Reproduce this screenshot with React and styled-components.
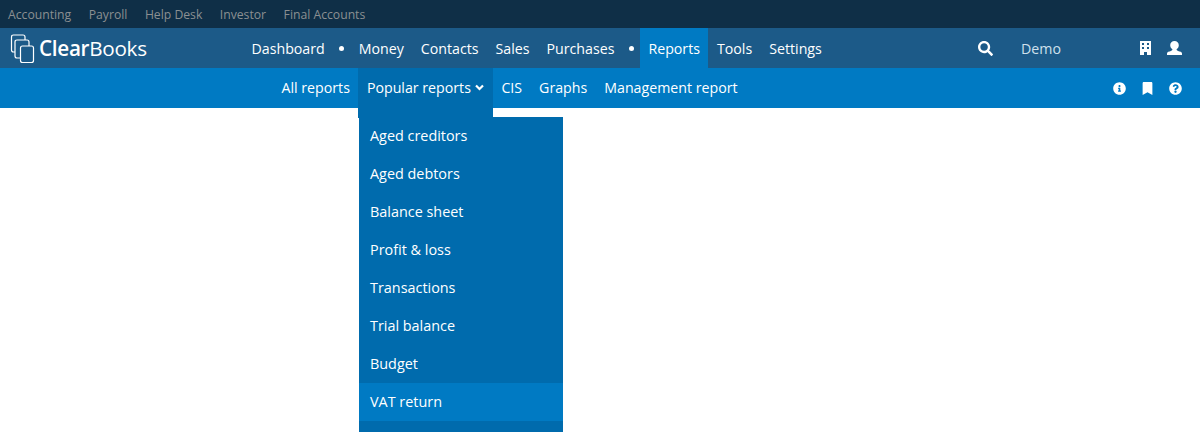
import React from 'react';
import styled, { createGlobalStyle } from 'styled-components';
import { FaSearch, FaInfoCircle, FaBookmark, FaQuestionCircle } from 'react-icons/fa';

const GlobalStyle = createGlobalStyle`
  html, body {
    margin: 0;
    padding: 0;
    background: #ffffff;
  }
  body {
    font-family: 'Open Sans', 'Liberation Sans', sans-serif;
    overflow: hidden;
  }
`;

const Page = styled.div`
  position: relative;
  width: 1200px;
  height: 432px;
  overflow: hidden;
`;

const TopBar = styled.div`
  display: flex;
  align-items: center;
  gap: 17.5px;
  height: 28px;
  padding-left: 8px;
  background-color: #0f2f47;
`;

const TopLink = styled.a`
  font-size: 12.2px;
  color: #8b8f92;
`;

const MainBar = styled.div`
  display: flex;
  align-items: stretch;
  height: 40px;
  background-color: #1c5a88;
`;

const Logo = styled.div`
  display: flex;
  align-items: center;
  width: 243px;
  padding-left: 10px;
  box-sizing: border-box;
  color: #ffffff;
`;

const LogoText = styled.span`
  font-size: 20.7px;
  letter-spacing: -0.3px;
  font-weight: ${(p) => (p.$bold ? 600 : 400)};
  margin-left: ${(p) => (p.$bold ? -1 : 0)}px;
`;

const NavItem = styled.a`
  display: flex;
  align-items: center;
  padding: 0 8.5px;
  font-size: 14.2px;
  color: #ffffff;
  background-color: ${(p) => (p.$active ? '#007ac3' : 'transparent')};
`;

const Dot = styled.span`
  align-self: center;
  width: 5px;
  height: 5px;
  margin: 0 6px;
  border-radius: 50%;
  background-color: #ffffff;
`;

const MainRight = styled.div`
  display: flex;
  align-items: center;
  margin-left: auto;
  padding-right: 18px;
  color: #ffffff;
  font-size: 15px;
`;

const DemoLabel = styled.span`
  margin: 0 79px 0 28px;
  font-size: 14.2px;
  color: #cfe0ec;
`;

const UserGlyph = styled.svg`
  margin-left: 16px;
`;

const SubBar = styled.div`
  display: flex;
  align-items: stretch;
  height: 40px;
  padding-left: 273px;
  background-color: #007ac3;
`;

const SubItem = styled(NavItem)`
  padding-bottom: 1px;
  box-sizing: border-box;
`;

const OpenSubItem = styled(SubItem)`
  position: relative;
  gap: 4.5px;
  background-color: #006bad;

  &::after {
    content: '';
    position: absolute;
    top: 100%;
    left: 0;
    right: 0;
    height: 10px;
    background-color: #006bad;
  }
`;

const SubIcons = styled.div`
  display: flex;
  align-items: center;
  gap: 15px;
  margin-left: auto;
  padding-right: 18px;
  color: #ffffff;
  font-size: 13px;
`;

const Menu = styled.div`
  position: absolute;
  top: 117px;
  left: 359px;
  width: 204px;
  height: 315px;
  background-color: #006bad;
`;

const MenuItem = styled.a`
  display: flex;
  align-items: center;
  height: 38px;
  padding: 0 0 1px 11px;
  box-sizing: border-box;
  font-size: 14.4px;
  color: #ffffff;
  background-color: ${(p) => (p.$hover ? '#007ac3' : 'transparent')};
`;

const menuItems = [
  'Aged creditors',
  'Aged debtors',
  'Balance sheet',
  'Profit & loss',
  'Transactions',
  'Trial balance',
  'Budget',
];

const LogoMark = () => (
  <svg width="30" height="32" viewBox="0 0 30 32" fill="none" stroke="#ffffff" strokeWidth="1.2">
    <path d="M5 20 H3.5 Q1.5 20 1.5 18 V5 Q1.5 3 3.5 3 H13 Q15 3 15 5 V8" />
    <path d="M10 26 H7 Q5 26 5 24 V10 Q5 8 7 8 H17 Q19 8 19 10 V14" />
    <rect x="10.5" y="14" width="13" height="16.5" rx="2" />
  </svg>
);

const BuildingGlyph = () => (
  <svg width="11" height="14" viewBox="0 0 11 14">
    <path
      fill="#ffffff"
      fillRule="evenodd"
      d="M0 0 H11 V14 H7 V11 H4 V14 H0 Z M2 2 V4 H4 V2 Z M7 2 V4 H9 V2 Z M2 6 V8 H4 V6 Z M7 6 V8 H9 V6 Z"
    />
  </svg>
);

const UserIcon = () => (
  <UserGlyph width="15" height="14" viewBox="0 0 15 14">
    <path
      fill="#ffffff"
      d="M7.5 0 C10 0 11.8 1.8 11.8 4.2 C11.8 6 10.8 7.4 9.6 8.3 C9.5 9.2 10 9.6 11 9.9 C13 10.4 15 10.8 15 12.4 V14 H0 V12.4 C0 10.8 2 10.4 4 9.9 C5 9.6 5.5 9.2 5.4 8.3 C4.2 7.4 3.2 6 3.2 4.2 C3.2 1.8 5 0 7.5 0 Z"
    />
  </UserGlyph>
);

const ChevronGlyph = () => (
  <svg width="9" height="7" viewBox="0 0 9 7" fill="none" stroke="#ffffff" strokeWidth="2.2">
    <path d="M1 1.5 L4.5 5 L8 1.5" />
  </svg>
);

const App = () => {
  return (
    <Page>
      <GlobalStyle />
      <TopBar>
        <TopLink>Accounting</TopLink>
        <TopLink>Payroll</TopLink>
        <TopLink>Help Desk</TopLink>
        <TopLink>Investor</TopLink>
        <TopLink>Final Accounts</TopLink>
      </TopBar>
      <MainBar>
        <Logo>
          <LogoMark />
          <LogoText $bold>Clear</LogoText>
          <LogoText>Books</LogoText>
        </Logo>
        <NavItem>Dashboard</NavItem>
        <Dot />
        <NavItem>Money</NavItem>
        <NavItem>Contacts</NavItem>
        <NavItem>Sales</NavItem>
        <NavItem>Purchases</NavItem>
        <Dot />
        <NavItem $active>Reports</NavItem>
        <NavItem>Tools</NavItem>
        <NavItem>Settings</NavItem>
        <MainRight>
          <FaSearch />
          <DemoLabel>Demo</DemoLabel>
          <BuildingGlyph />
          <UserIcon />
        </MainRight>
      </MainBar>
      <SubBar>
        <SubItem>All reports</SubItem>
        <OpenSubItem>
          Popular reports
          <ChevronGlyph />
        </OpenSubItem>
        <SubItem>CIS</SubItem>
        <SubItem>Graphs</SubItem>
        <SubItem>Management report</SubItem>
        <SubIcons>
          <FaInfoCircle />
          <FaBookmark />
          <FaQuestionCircle />
        </SubIcons>
      </SubBar>
      <Menu>
        {menuItems.map((item) => (
          <MenuItem key={item}>{item}</MenuItem>
        ))}
        <MenuItem $hover>VAT return</MenuItem>
      </Menu>
    </Page>
  );
};

export default App;
